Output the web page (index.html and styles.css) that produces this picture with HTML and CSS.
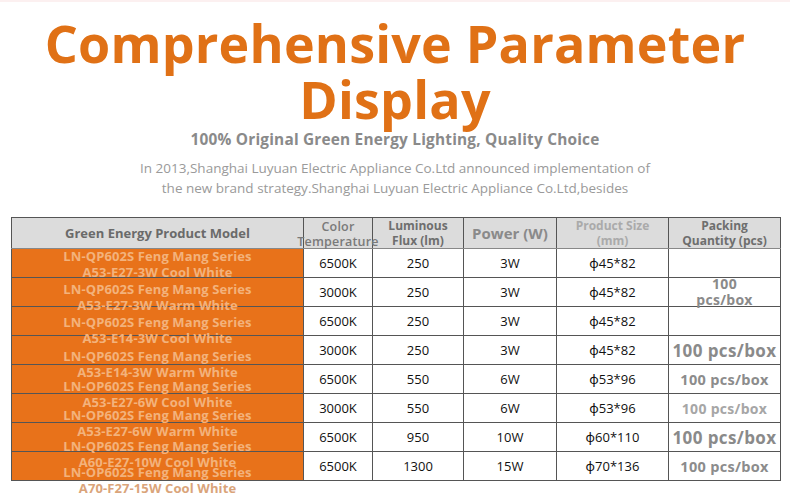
FILE: index.html
```html
<!DOCTYPE html>
<html lang="en">
<head>
<meta charset="utf-8">
<title>Comprehensive Parameter Display</title>
<link rel="stylesheet" href="styles.css">
</head>
<body>
<div class="page">
  <header class="hero">
    <h1 class="title">Comprehensive Parameter<br>Display</h1>
    <p class="subtitle">100% Original Green Energy Lighting, Quality Choice</p>
    <p class="intro">In 2013,Shanghai Luyuan Electric Appliance Co.Ltd announced implementation of<br>the new brand strategy.Shanghai Luyuan Electric Appliance Co.Ltd,besides</p>
  </header>
  <table class="spec">
    <colgroup>
      <col class="c-model"><col class="c-temp"><col class="c-flux"><col class="c-power"><col class="c-size"><col class="c-pack">
    </colgroup>
    <thead>
      <tr>
        <th class="h-model">Green Energy Product Model</th>
        <th class="h-temp"><div class="hwrap">Color<br>Temperature</div></th>
        <th class="h-flux">Luminous<br>Flux (lm)</th>
        <th class="h-power">Power (W)</th>
        <th class="h-size">Product Size<br>(mm)</th>
        <th class="h-pack">Packing<br>Quantity (pcs)</th>
      </tr>
    </thead>
    <tbody>
      <tr>
        <td class="model"><div class="mwrap">LN-QP602S Feng Mang Series<br>A53-E27-3W Cool White</div></td>
        <td>6500K</td><td>250</td><td>3W</td><td>ϕ45*82</td>
        <td class="pack"></td>
      </tr>
      <tr>
        <td class="model"><div class="mwrap">LN-QP602S Feng Mang Series<br>A53-E27-3W Warm White</div></td>
        <td>3000K</td><td>250</td><td>3W</td><td>ϕ45*82</td>
        <td class="pack"><div class="pwrap">100<br>pcs/box</div></td>
      </tr>
      <tr>
        <td class="model"><div class="mwrap">LN-QP602S Feng Mang Series<br>A53-E14-3W Cool White</div></td>
        <td>6500K</td><td>250</td><td>3W</td><td>ϕ45*82</td>
        <td class="pack"></td>
      </tr>
      <tr>
        <td class="model"><div class="mwrap">LN-QP602S Feng Mang Series<br>A53-E14-3W Warm White</div></td>
        <td>3000K</td><td>250</td><td>3W</td><td>ϕ45*82</td>
        <td class="pack big">100 pcs/box</td>
      </tr>
      <tr>
        <td class="model"><div class="mwrap">LN-OP602S Feng Mang Series<br>A53-E27-6W Cool White</div></td>
        <td>6500K</td><td>550</td><td>6W</td><td>ϕ53*96</td>
        <td class="pack mid">100 pcs/box</td>
      </tr>
      <tr>
        <td class="model"><div class="mwrap">LN-OP602S Feng Mang Series<br>A53-E27-6W Warm White</div></td>
        <td>3000K</td><td>550</td><td>6W</td><td>ϕ53*96</td>
        <td class="pack light">100 pcs/box</td>
      </tr>
      <tr>
        <td class="model"><div class="mwrap">LN-QP602S Feng Mang Series<br>A60-E27-10W Cool White</div></td>
        <td>6500K</td><td>950</td><td>10W</td><td>ϕ60*110</td>
        <td class="pack big">100 pcs/box</td>
      </tr>
      <tr>
        <td class="model"><div class="mwrap">LN-OP602S Feng Mang Series<br><span class="spill">A70-F27-15W Cool White</span></div></td>
        <td>6500K</td><td>1300</td><td>15W</td><td>ϕ70*136</td>
        <td class="pack mid">100 pcs/box</td>
      </tr>
    </tbody>
  </table>
</div>
</body>
</html>
```
FILE: styles.css
```css
html, body {
  margin: 0;
  padding: 0;
  background: #ffffff;
}
body {
  font-family: "Open Sans", "Noto Sans", sans-serif;
  border-top: 2px solid #fcf0f0;
}
.page {
  width: 790px;
  height: 495px;
  overflow: hidden;
}
.hero {
  text-align: center;
}
.title {
  margin: 0;
  padding-top: 13px;
  font-size: 52px;
  line-height: 56px;
  font-weight: 700;
  font-stretch: 91%;
  color: #e07116;
  letter-spacing: 0.2px;
}
.subtitle {
  margin: 3px 0 0;
  font-size: 15.4px;
  line-height: 20px;
  font-weight: 700;
  font-stretch: 91%;
  letter-spacing: 0.2px;
  color: #8a8a8a;
}
.intro {
  margin: 9px 0 0;
  font-size: 13.5px;
  line-height: 19.5px;
  font-stretch: 90%;
  letter-spacing: 0;
  color: #9a9a9a;
}
.spec {
  margin: 19px 0 0 11px;
  border-collapse: collapse;
  table-layout: fixed;
  width: 770px;
  border-top: 1px solid #7a7a7a;
  border-left: 1px solid #7a7a7a;
}
.c-model { width: 292px; }
.c-temp { width: 69px; }
.c-flux { width: 91px; }
.c-power { width: 93px; }
.c-size { width: 112px; }
.c-pack { width: 112px; }
.spec th, .spec td {
  border: 1px solid #555;
  padding: 0;
  text-align: center;
  vertical-align: middle;
  height: 28px;
}
.spec thead th {
  background: #dcdcdc;
  color: #6e6e6e;
  font-weight: 700;
  font-size: 12px;
  line-height: 15px;
  border-bottom-color: #888;
  white-space: nowrap;
}
.spec .h-model {
  font-size: 13px;
  color: #6a6a6a;
}
.spec .h-temp {
  font-size: 12.5px;
  color: #7a7a7a;
  font-weight: 600;
  letter-spacing: 0.2px;
}
.hwrap {
  height: 28px;
  margin: 0 -12px;
  line-height: 15px;
}
.spec .h-power {
  font-size: 15px;
  color: #8a8a8a;
}
.spec .h-size {
  color: #aaaaaa;
}
.spec td {
  font-size: 13px;
  color: #111;
}
.spec td.model {
  background: #e8721a;
  color: #f3b27c;
  font-weight: 700;
  font-size: 13px;
  letter-spacing: 0.1px;
  vertical-align: top;
  text-align: center;
}
.mwrap {
  box-sizing: border-box;
  height: 28px;
  line-height: 15.8px;
  white-space: nowrap;
}
tbody tr:nth-child(1) .mwrap { padding-top: 0px; }
tbody tr:nth-child(2) .mwrap { padding-top: 4px; }
tbody tr:nth-child(3) .mwrap { padding-top: 8px; }
tbody tr:nth-child(4) .mwrap { padding-top: 13px; }
tbody tr:nth-child(5) .mwrap { padding-top: 14px; }
tbody tr:nth-child(6) .mwrap { padding-top: 14px; }
tbody tr:nth-child(7) .mwrap { padding-top: 16px; }
tbody tr:nth-child(8) .mwrap { padding-top: 13px; }
.spill {
  color: #daa47a;
}
.spec td.pack {
  color: #8a8a8a;
  font-weight: 700;
  font-size: 14px;
  letter-spacing: 0.3px;
  white-space: nowrap;
}
.pwrap {
  box-sizing: border-box;
  height: 28px;
  line-height: 16px;
  margin-top: -4px;
}
.spec td.big {
  font-size: 17px;
  letter-spacing: 0.4px;
}
.spec td.mid {
  font-size: 14.5px;
  color: #8c8c8c;
}
.spec td.light {
  color: #a6a6a6;
}
```
